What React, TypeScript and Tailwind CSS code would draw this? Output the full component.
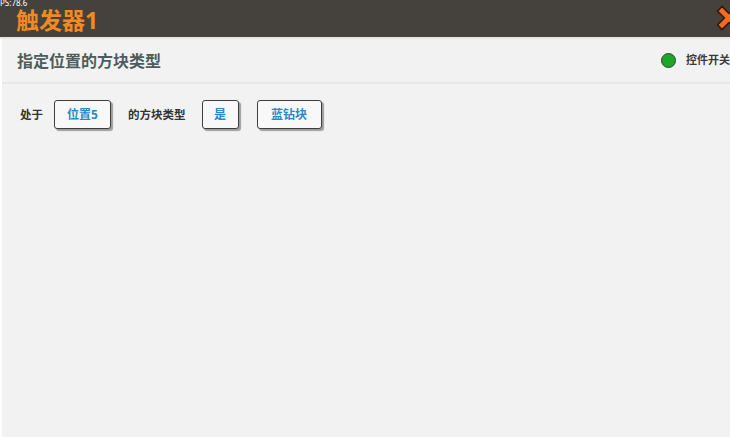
import React from "react";

function Btn({ children, w }: { children: React.ReactNode; w: string }) {
  return (
    <div
      className={`${w} h-[29px] flex items-center justify-center rounded-[3px] border-[1.5px] border-[#3e3e3e] bg-[#f8f8f8] shadow-[2px_2px_1px_rgba(0,0,0,0.35)] text-[12px] font-bold text-[#2a88c6]`}
    >
      {children}
    </div>
  );
}

export default function App() {
  const font = { fontFamily: '"Noto Sans", "Noto Sans CJK SC", sans-serif' };
  return (
    <div className="w-[730px] h-[437px] overflow-hidden flex flex-col bg-[#f2f2f2]" style={font}>
      <div className="relative h-[37px] bg-[#45423d] flex items-center shrink-0 overflow-hidden">
        <span className="absolute left-0 top-[-2px] text-[8px] leading-[10px] text-white">PS:78.6</span>
        <span className="ml-[16px] mt-[3px] text-[23px] font-bold text-[#f28a1f] leading-none">触发器1</span>
        <svg className="absolute left-[714px] top-[3px]" width="30" height="30" viewBox="0 0 26 26">
          <path
            d="M3 7 L7 3 L13 9 L19 3 L23 7 L17 13 L23 19 L19 23 L13 17 L7 23 L3 19 L9 13 Z"
            fill="#f46a22"
            stroke="#3a1a0a"
            strokeWidth="1.5"
            strokeLinejoin="round"
          />
        </svg>
      </div>
      <div className="h-[2px] bg-[#e4e6e6] shrink-0" />
      <div className="flex-1 flex flex-col border-l-[2px] border-white">
        <div className="h-[45px] flex items-center pl-[15px] pr-0 border-b-[2px] border-[#e6e8e8]">
          <span className="text-[16px] font-bold text-[#4d5d5c]">指定位置的方块类型</span>
          <div className="ml-auto flex items-center">
            <div className="w-[15px] h-[15px] rounded-full bg-[#1ea629] border-[1.5px] border-[#2b4a2b]" />
            <span className="ml-[10px] text-[11px] font-bold text-[#3a3a3a] whitespace-nowrap">控件开关</span>
          </div>
        </div>
        <div className="flex items-center mt-[16px] pl-[18px] text-[11.5px] font-bold text-[#333]">
          <span>处于</span>
          <div className="ml-[11px]"><Btn w="w-[57px]">位置5</Btn></div>
          <span className="ml-[17px]">的方块类型</span>
          <div className="ml-[16px]"><Btn w="w-[37px]">是</Btn></div>
          <div className="ml-[18px]"><Btn w="w-[65px]">蓝钻块</Btn></div>
        </div>
      </div>
    </div>
  );
}
